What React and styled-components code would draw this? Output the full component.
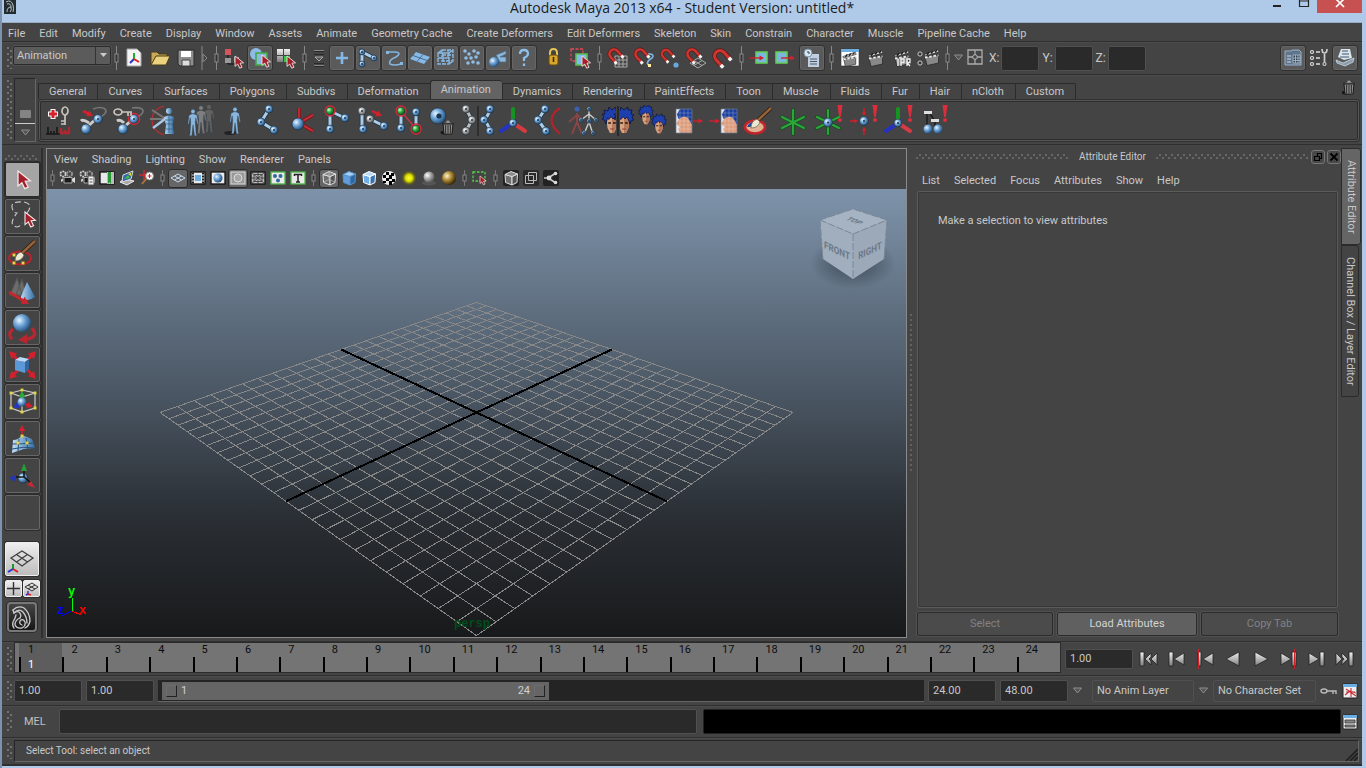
import React, { useState } from 'react'
import styled, { createGlobalStyle, css } from 'styled-components'

const GlobalStyle = createGlobalStyle`
    * {
        box-sizing: border-box;
    }
    body {
        margin: 0;
        background: #afcae8;
        color: #c8c8c8;
        font: 11px/14px Roboto, 'Noto Sans', sans-serif;
    }
    button, input, select {
        font: inherit;
        color: inherit;
        margin: 0;
        padding: 0;
    }
    button {
        border: none;
        background: none;
    }
    svg {
        flex: none;
    }
`

const raised = css`
    border: 1px solid #2b2b2b;
    border-radius: 2px;
    box-shadow: 0 0 0 1px #515151;
`

const Desktop = styled.div`
    min-height: 100vh;
    display: flex;
    flex-direction: column;
    padding: 0 4px 4px 2px;
    background: linear-gradient(90deg, #7b93ae 2px, #afcae8 2px);
`

const TitleBar = styled.header`
    display: grid;
    grid-template-columns: 1fr auto 1fr;
    height: 23px;
    background: #afcae8;
    border-bottom: 1px solid #94acc6;
    color: #1c1c1c;
    align-items: start;
`

const AppLogo = styled.span`
    display: flex;
    padding-left: 2px;
`

const WindowTitle = styled.h1`
    margin: 0;
    font: 14px/16px 'Open Sans', 'Noto Sans', sans-serif;
`

const WindowButtons = styled.div`
    display: flex;
    justify-content: flex-end;
`

const WindowButton = styled.button`
    display: flex;
    justify-content: center;
    width: ${(props) => (props.$close ? '45px' : '27px')};
    height: 13px;
    background: ${(props) => (props.$close ? '#c75050' : 'none')};
`

const Frame = styled.div`
    flex: 1;
    display: flex;
    flex-direction: column;
    background: #444;
    border-bottom: 2px solid #303030;
`

const MenuBar = styled.nav`
    display: flex;
    align-items: center;
    gap: 14px;
    height: ${(props) => props.$height || '18px'};
    padding: ${(props) => props.$top || '3px'} ${(props) => props.$pad || '6px'} 0;
`

const MenuItem = styled.button`
    white-space: nowrap;
    line-height: 15px;
`

const Bar = styled.div`
    display: flex;
    align-items: center;
    height: ${(props) => props.$height};
    padding: 0 ${(props) => props.$end || '4px'} 0 5px;
    border-top: 1px solid #2f2f2f;
    box-shadow: inset 0 1px #4c4c4c;
    gap: ${(props) => props.$gap || '0'};
`

const Grip = styled.span`
    flex: none;
    align-self: stretch;
    width: 5px;
    margin: 5px ${(props) => (props.$tight ? '-2px' : '1px')} 5px 0;
    background-image: radial-gradient(circle at 1px 1px, #717171 1px, transparent 1px),
        radial-gradient(circle at 4px 4px, #717171 1px, transparent 1px);
    background-size: 5px 6px;
`

const HorizontalGrip = styled.span`
    flex: ${(props) => (props.$fixed ? 'none' : 1)};
    height: 5px;
    background-image: radial-gradient(circle at 1px 4px, #676767 1px, transparent 1px),
        radial-gradient(circle at 4px 1px, #676767 1px, transparent 1px);
    background-size: 6px 5px;
`

const SplitterDots = styled.span`
    align-self: center;
    width: 4px;
    height: 160px;
    background-image: radial-gradient(circle at 2px 2px, #626262 1px, transparent 1px);
    background-size: 4px 5px;
`

const ModeSelect = styled.select`
    appearance: none;
    width: 98px;
    height: 19px;
    align-self: flex-start;
    margin-top: 4px;
    padding: 0 4px 0 3px;
    color: #c8c8c8;
    background:
        linear-gradient(90deg, transparent 81px, #333 81px, #333 82px, transparent 82px),
        #5b5b5b;
    ${raised}
`

const ModeBox = styled.span`
    display: flex;
    align-self: stretch;
    position: relative;

    svg {
        position: absolute;
        right: 3px;
        top: 11px;
        pointer-events: none;
    }
`

const ToolButton = styled.button`
    flex: none;
    display: flex;
    align-items: center;
    justify-content: center;
    width: ${(props) => props.$width || '26px'};
    height: 26px;
    ${(props) =>
        props.$on &&
        css`
            background: #5a5a5a;
            border: 1px solid #303030;
            border-radius: 3px;
            box-shadow: inset 0 0 0 1px #666;
        `}
`

const Divider = styled.span`
    flex: none;
    display: flex;
    justify-content: center;
    width: ${(props) => props.$width || '10px'};
`

const Spacer = styled.span`
    flex: ${(props) => (props.$width ? 'none' : 1)};
    width: ${(props) => props.$width || 'auto'};
`

const Coord = styled.label`
    display: flex;
    align-items: center;
    gap: 2px;
    margin-left: 3px;
    font-size: 12px;
`

const Field = styled.input`
    flex: ${(props) => (props.$width ? 'none' : '1 1 0')};
    width: ${(props) => props.$width || 'auto'};
    min-width: 0;
    height: ${(props) => props.$height || '22px'};
    padding: 0 4px;
    color: #c8c8c8;
    background: ${(props) => props.$fill || '#2a2a2a'};
    border: 1px solid ${(props) => props.$edge || '#505050'};
    border-radius: 2px;
`

const Shelf = styled.section`
    display: flex;
    height: 70px;
    padding: 0 4px 0 5px;
    border-top: 1px solid #2f2f2f;
    box-shadow: inset 0 1px #4c4c4c;
`

const ShelfSide = styled.div`
    display: flex;
    flex-direction: column;
    justify-content: flex-end;
    align-items: center;
    width: 22px;
    margin: 3px 2px 2px 1px;
    border: 1px solid #282828;
    border-right-color: #666;
    border-bottom-color: #666;
`

const ShelfSwitch = styled.button`
    display: flex;
    align-items: center;
    justify-content: center;
    width: 100%;
    height: 18px;

    & + & {
        border-top: 1px solid #ccc;
    }
`

const ShelfBody = styled.div`
    flex: 1;
    min-width: 0;
    display: flex;
    flex-direction: column;
`

const TabRow = styled.div`
    display: flex;
    align-items: flex-end;
    height: 24px;
`

const Tab = styled.button`
    height: ${(props) => (props.$active ? '19px' : '16px')};
    padding: 0 11px 0 10px;
    white-space: nowrap;
    line-height: 14px;
    border: solid #2b2b2b;
    border-width: 1px 0 0 1px;
    background: ${(props) => (props.$active ? '#636363' : '#444')};
    border-radius: ${(props) => (props.$active ? '3px 3px 0 0' : '0')};

    &:last-of-type {
        border-right-width: 1px;
        border-radius: 0 2px 0 0;
    }
`

const ShelfIcons = styled.div`
    display: flex;
    align-items: center;
    gap: 3px;
    height: 39px;
    margin: 2px 0 0 2px;
    padding-left: 1px;
    border: 1px solid #2d2d2d;
    border-radius: 2px;
    box-shadow: 0 0 0 1px #555, 0 0 0 2px #303030;
`

const ShelfButton = styled.button`
    flex: none;
    display: flex;
    width: 32px;
    height: 32px;
`

const Workspace = styled.main`
    flex: 1;
    display: flex;
    min-height: 0;
    border-top: 1px solid #2f2f2f;
    padding: 3px 0;
`

const Toolbox = styled.aside`
    flex: none;
    display: flex;
    flex-direction: column;
    gap: 2px;
    width: 41px;
    padding: 7px 3px 0 3px;
    margin-right: 3px;
    border-right: 2px solid #2f2f2f;
`

const ToolSlot = styled.button`
    display: flex;
    align-items: center;
    justify-content: center;
    width: 35px;
    height: 35px;
    background: ${(props) => (props.$active ? '#a5a5a5' : '#444')};
    border: 1px solid ${(props) => (props.$active ? '#2b2b2b' : '#666')};
    border-radius: 2px;
    box-shadow: 0 0 0 1px #2d2d2d;
`

const LayoutSlot = styled(ToolSlot)`
    height: ${(props) => (props.$half ? '17px' : '34px')};
    width: ${(props) => (props.$half ? '17px' : '34px')};
    border-color: #eee;
    background: linear-gradient(#eee, #bdbdbd);
`

const LayoutRow = styled.div`
    display: flex;
    gap: 1px;
    margin-top: ${(props) => props.$top};
`

const MayaSlot = styled(ToolSlot)`
    width: 30px;
    height: 30px;
    margin: 3px 2px 0;
    background: linear-gradient(#454545, #161616);
    border: 2px solid #777;
    border-radius: 4px;
`

const Panel = styled.section`
    flex: 1;
    min-width: 0;
    display: flex;
    flex-direction: column;
    border: 1px solid #8a8a8a;
`

const PanelTools = styled.div`
    display: flex;
    align-items: center;
    height: 21px;
    padding-bottom: 1px;
`

const PanelTool = styled.button`
    flex: none;
    display: flex;
    align-items: center;
    justify-content: center;
    width: 20px;
    height: 19px;
    ${(props) =>
        props.$on &&
        css`
            background: #666;
            border: 1px solid #2c2c2c;
            border-radius: 3px;
        `}
`

const Canvas = styled.div`
    flex: 1;
    min-height: 0;
    display: flex;
    background: linear-gradient(#7e93aa, #4a5663 46%, #2b3036 72%, #18191a);

    svg {
        flex: 1;
        width: 100%;
        height: 100%;
    }
`

const Dock = styled.aside`
    flex: none;
    display: flex;
    width: 455px;
`

const Editor = styled.section`
    flex: 1;
    display: flex;
    flex-direction: column;
    margin-left: 3px;
`

const EditorTitle = styled.div`
    display: flex;
    align-items: center;
    gap: 10px;
    height: 17px;
    font-size: 10px;
`

const TitleTools = styled.span`
    display: flex;
    gap: 2px;
    margin-left: -8px;
`

const TitleTool = styled.button`
    display: flex;
    width: 14px;
    height: 14px;
    padding: 1px;
    border: 1px solid #777;
    border-radius: 3px;
    background: #484848;
`

const EditorBody = styled.div`
    flex: 1;
    padding: 22px 20px;
    margin: 0 3px 4px 1px;
    border: 1px solid #5a5a5a;
    border-radius: 2px;
    box-shadow: inset 0 0 0 1px #383838;
`

const EditorActions = styled.div`
    display: grid;
    grid-template-columns: 136px 1fr 137px;
    gap: 4px;
    padding: 0 3px 2px 1px;
`

const ActionButton = styled.button`
    height: 24px;
    background: ${(props) => (props.disabled ? '#4b4b4b' : '#606060')};
    color: ${(props) => (props.disabled ? '#828282' : '#d4d4d4')};
    ${raised}
`

const SideTabs = styled.div`
    display: flex;
    flex-direction: column;
    width: 21px;
`

const SideTab = styled.button`
    writing-mode: vertical-rl;
    width: ${(props) => (props.$active ? '20px' : '18px')};
    height: ${(props) => (props.$active ? '97px' : '152px')};
    background: ${(props) => (props.$active ? '#656565' : '#444')};
    border: 1px solid #2b2b2b;
    border-radius: 0 3px 3px 0;
    line-height: 16px;
`

const Track = styled.div`
    flex: 1;
    display: grid;
    grid-template-columns: repeat(24, 1fr);
    height: 31px;
    margin-bottom: 3px;
    padding-left: 4px;
    background: #747474;
    border: 1px solid #2b2b2b;
    color: #0c0c0c;
    line-height: 13px;
`

const Frames = styled.div`
    display: flex;
    flex-direction: column;
    justify-content: space-between;
    padding: 0 0 1px 9px;
    background: linear-gradient(#000, #000) 0 100% / 2px 15px no-repeat ${(props) => (props.$current ? '#5d5d5d' : '#747474')};
`

const CurrentFrame = styled.span`
    color: #fff;
`

const Transport = styled.div`
    display: flex;
    gap: 4px;
`

const TransportButton = styled.button`
    display: flex;
    justify-content: center;
    width: 24px;
    height: 22px;
`

const RangeTrack = styled.div`
    flex: 1;
    display: flex;
    height: 22px;
    padding: 2px 4px 1px;
    background: #242424;
    border-bottom: 1px solid #656565;
`

const RangeBar = styled.div`
    display: flex;
    align-items: center;
    gap: 4px;
    padding: 0 4px;
    background: #656565;
    color: #d0d0d0;
`

const RangeHandle = styled.button`
    width: 11px;
    height: 12px;
    border: 1px solid #6d6d6d;
    border-right-color: #222;
    border-bottom-color: #222;
`

const CommandLabel = styled.label`
    width: 46px;
    padding-left: 11px;
    color: #c0c0c0;
`

const HelpLine = styled.div`
    flex: 1;
    display: flex;
    align-items: center;
    justify-content: space-between;
    height: 22px;
    margin-left: 1px;
    padding-left: 11px;
    font-size: 10px;
    border: 1px solid #262626;
    border-right-color: #666;
    border-bottom-color: #666;
`

/* ---------- drawing helpers ---------- */

const Defs = styled.svg`
    position: absolute;
    width: 0;
    height: 0;
`

function Gradients() {
    const balls = [
        ['ball', '#eaf6ff', '#6da4d8', '#1f4870'],
        ['green', '#d8ffd8', '#2fae3c', '#0b5014'],
        ['grayBall', '#fff', '#aaa', '#555'],
        ['gold', '#fff6cf', '#b08a35', '#2e2004'],
        ['glow', '#ffff30', '#d8d800', '#44440000'],
    ]
    return (
        <Defs aria-hidden="true">
            <defs>
                {balls.map(([id, a, b, c]) => (
                    <radialGradient key={id} id={id} cx={id === 'glow' ? '.5' : '.35'} cy={id === 'glow' ? '.5' : '.35'} r={id === 'glow' ? '.5' : '.7'}>
                        <stop offset="0" stopColor={a} />
                        <stop offset=".45" stopColor={b} />
                        <stop offset="1" stopColor={c} />
                    </radialGradient>
                ))}
                <linearGradient id="steel" x2="1">
                    <stop offset="0" stopColor="#bfe0fa" />
                    <stop offset="1" stopColor="#326da6" />
                </linearGradient>
                <linearGradient id="silver" x2="0" y2="1">
                    <stop offset="0" stopColor="#f2f2f2" />
                    <stop offset="1" stopColor="#7d7d7d" />
                </linearGradient>
                <radialGradient id="cubeShadow">
                    <stop offset=".2" stopColor="#2b3743" stopOpacity=".6" />
                    <stop offset="1" stopColor="#2b3743" stopOpacity="0" />
                </radialGradient>
            </defs>
        </Defs>
    )
}

const Svg = ({ size = 24, w, h, children }) => (
    <svg width={w || size} height={h || size} viewBox={`0 0 ${w || size} ${h || size}`} fill="none" aria-hidden="true">
        {children}
    </svg>
)

const Ball = ({ x, y, r = 4, fill = 'ball', ring }) => (
    <>
        <circle cx={x} cy={y} r={r} fill={`url(#${fill})`} stroke="#222d38" strokeWidth=".6" />
        {r < 5 && fill !== 'green' && <circle cx={x} cy={y} r="1" fill="#18324c" />}
        {ring && <circle cx={x} cy={y} r={r + 1} stroke="#d8283a" strokeWidth="1.3" />}
    </>
)

const Bones = ({ d, gray }) => (
    <>
        <path d={d} stroke="#26333f" strokeWidth="4.6" />
        <path d={d} stroke={gray ? '#bdbdbd' : '#a9cdea'} strokeWidth="3" />
    </>
)

const Cursor = ({ x, y, s = 1 }) => (
    <path
        transform={`translate(${x} ${y}) scale(${s})`}
        d="M0 0V11.5L3 9l2.2 4.6 2.6-1.2L5.6 8 9.5 7.6z"
        fill="#a3202b"
        stroke="#f2e6e6"
        strokeWidth="1"
    />
)

const Arrow = ({ x1, y1, x2, y2, c = '#d3202d', w = 1.4, s = 3 }) => {
    const a = Math.atan2(y2 - y1, x2 - x1)
    const at = (d, k) => `${x2 + d * Math.cos(a + k)} ${y2 + d * Math.sin(a + k)}`
    return (
        <>
            <path d={`M${x1} ${y1}L${x2 - s * Math.cos(a)} ${y2 - s * Math.sin(a)}`} stroke={c} strokeWidth={w} />
            <path d={`M${x2} ${y2}L${at(s * 1.7, Math.PI - 0.5)} ${at(s * 1.7, Math.PI + 0.5)}z`} fill={c} />
        </>
    )
}

const Figure = ({ x, y = 16, fill = '#8ab6dc', o = 1, s = 1 }) => (
    <g transform={`translate(${x} ${y}) scale(${s})`} opacity={o} fill={fill} stroke="#24384a" strokeWidth=".4">
        <circle cx="0" cy="-11" r="2.3" />
        <path d="M-1-8.6-4.2-7.2-5.4 1.5-4.5 3-3-4.5-2.4 0-3.2 13-4 14.4H-1.2L0 3 1.6 14.4H4.2L3.3 12.6 2.4 0 3-4.5 4.8 3 5.7 1.5 4.2-7.2 1-8.6z" />
    </g>
)

const Head = ({ x, y, s = 1 }) => (
    <g transform={`translate(${x} ${y}) scale(${s})`}>
        <path d="M-4-7Q0-9 4-7L5.2 0 4.5 6 2 11H-2L-4.5 6-5.2 0z" fill="#d9a482" />
        <path d="M5.2 0 4.5 6 2 11H0V-4H4z" fill="#b77b5c" />
        <path d="M-6 2-7.5-2-10-3-8-5-10-8-7-8-8-12-4-11-3-15 0-12 4-15 4-12 8-12 7-8 10-7 8-5 9.5-2 7-1 6 2 4.6-2 3-5 1-3-1-5.5-3-2.5-4.6-4z" fill="#1e3fae" stroke="#0a1238" strokeWidth=".8" />
        <path d="M-3.8 1H-1M1 1H3.8" stroke="#2c1a12" strokeWidth="1.3" />
        <path d="M-1.8 7H1.8" stroke="#8c4334" strokeWidth="1.1" />
    </g>
)

const Bang = () => (
    <>
        <path d="M25.5 0h5L28.8 12h-1.6z" fill="#d92f3d" />
        <circle cx="28" cy="15" r="2" fill="#d92f3d" />
    </>
)

const Trash = ({ x = 0, y = 0 }) => (
    <g transform={`translate(${x} ${y})`}>
        <ellipse cx="2.5" cy="12.6" rx="4" ry="1.8" fill="#161616" />
        <path d="M1 4H11L10 14H2z" fill="#8b8b8b" stroke="#1a1a1a" />
        <path d="M3.6 5V13M6 5V13M8.4 5V13" stroke="#2d2d2d" />
        <path d="M0 3.5Q6 0 12 3.5z" fill="#aaa" stroke="#222" strokeWidth=".7" />
        <path d="M4.5 1.3H7.5" stroke="#bbb" />
    </g>
)

const Star = () => (
    <>
        <path d="M16 5V29M5 12 27 23M27 12 5 23" stroke="#0e4f18" strokeWidth="3.6" strokeLinecap="round" />
        <path d="M16 5V29M5 12 27 23M27 12 5 23" stroke="#2ba63a" strokeWidth="2.2" strokeLinecap="round" />
    </>
)

const Triad = () => (
    <>
        <path d="M16 18V4" stroke="#179323" strokeWidth="4" strokeLinecap="round" />
        <path d="M16 18 4 26" stroke="#2633be" strokeWidth="4" strokeLinecap="round" />
        <path d="M16 18 28 26" stroke="#d63a43" strokeWidth="4" strokeLinecap="round" />
        <Ball x={16} y={18} r={4} />
    </>
)

const Brush = ({ x = 0, y = 0 }) => (
    <g transform={`translate(${x} ${y})`}>
        <path d="M14 15 28 2" stroke="#2c1b0d" strokeWidth="4" />
        <path d="M14 15 28 2" stroke="#96633a" strokeWidth="2.5" />
        <path d="M8 22Q8 15 14 13L17 16Q15 22 8 22z" fill="#ece7d1" stroke="#655d48" strokeWidth=".7" />
    </g>
)

const GridHead = ({ x }) => (
    <g transform={`translate(${x} 4)`}>
        <path d="M0 0H16V24H0z" fill="#e3e7ef" />
        <path d="M2 9 1 5 4 0H16V16Q12 7 3 10z" fill="#1c3f9e" />
        <path d="M3 10Q8 6 12 9L16 16V24H4L2 20 4 18 0 15z" fill="#dc9c7b" />
        <path d="M0 4H16M0 8H16M0 12H16M0 16H16M0 20H16M4 0V24M8 0V24M12 0V24" stroke="#ffffff70" strokeWidth=".5" />
        <path d="M0 0H16V24H0z" stroke="#6b7b95" strokeWidth=".7" />
    </g>
)

const Clapper = ({ x = 3, y = 3 }) => (
    <g transform={`translate(${x} ${y})`}>
        <path d="M1 6.5 15 1.5 16 4 2 8z" fill="#ddd" stroke="#222" strokeWidth=".7" />
        <path d="M4 7 6 4M8 5.5 10 3M12 4.3 14 2" stroke="#222" strokeWidth="1.5" />
        <path d="M2 9 15.5 7V15L4 17.5z" fill="#888" stroke="#222" strokeWidth=".7" />
        <path d="M2 9.5 15.5 7.3" stroke="#eee" strokeWidth="1.8" strokeDasharray="2.5 1.8" />
    </g>
)

const Magnet = ({ x = 8, y = 8, s = 1 }) => (
    <g transform={`translate(${x} ${y}) rotate(-42) scale(${s})`}>
        <path d="M-4.5 7V0A4.5 4.5 0 0 1 4.5 0V7" stroke="#5f1515" strokeWidth="3.8" />
        <path d="M-4.5 7V0A4.5 4.5 0 0 1 4.5 0V7" stroke="#cd352f" strokeWidth="2.6" />
        <path d="M-4.5 6V9M4.5 6V9" stroke="#f4f4f4" strokeWidth="3" />
    </g>
)

const KeyShape = ({ x, y, vertical }) => (
    <g transform={`translate(${x} ${y})${vertical ? ' rotate(90)' : ''}`} stroke="#c9c4bb" strokeWidth="1.7">
        <ellipse cx="0" cy="0" rx="4" ry="3" />
        <path d="M4 0H14M10 0V4M13 0V4" />
    </g>
)

const Handles = ({ pts }) =>
    pts.map(([x, y]) => <rect key={`${x}-${y}`} x={x - 1} y={y - 1} width="2" height="2" fill="#fff" stroke="#d6c824" />)

const Cam = () => (
    <>
        <circle cx="4" cy="4" r="2.6" stroke="#ccc" strokeWidth="1.8" strokeDasharray="2 .8" />
        <circle cx="10.5" cy="4" r="2.6" stroke="#999" strokeWidth="1.8" strokeDasharray="2 .8" />
        <path d="M5 7.5H13V13H5z" fill="#1a1a1a" stroke="#aaa" />
        <path d="M13 9 16 7V13L13 11" fill="#ddd" />
        <path d="M4 8.5 2 9.5V12L4 11" fill="#ccc" />
    </>
)

const Chip = ({ edge = '#111', fill = '#e9e9e9', children }) => (
    <>
        <rect x="1" y="2" width="14" height="12" fill={fill} stroke={edge} strokeWidth="1.3" />
        {children}
    </>
)

const Cube = ({ fill = '#6e6e6e', edge = '#ddd', side = '#555', top = '#8a8a8a' }) => (
    <g stroke={edge} strokeLinejoin="round">
        <path d="M2 4.5 9 6.5V15L2.6 12.5z" fill={fill} />
        <path d="M9 6.5 14.5 4 14 12.5 9 15z" fill={side} />
        <path d="M2 4.5 8 1.5 14.5 4 9 6.5z" fill={top} />
    </g>
)

const IsoGrid = () => (
    <path d="M5 15 16 8 27 15 16 23zM10.5 11.5 21.5 19M21.5 11.5 10.5 19" stroke="#3f3f3f" strokeWidth="1.3" />
)

/* ---------- icon tables ---------- */

const shelfIcons = [
    ['Set Key', <>
        <path d="M11 4V14M6 9H16" stroke="#fff" strokeWidth="5" />
        <path d="M11 5V13M7 9H15" stroke="#d8202c" strokeWidth="3" />
        <KeyShape x={23} y={6} vertical />
        <path d="M4 29H18M6 22V29M9 26V29M12 26V29M15 22V29" stroke="#181818" strokeWidth="1.6" />
        <path d="M18 28H28M19 23V29M23 25V29M27 22V29" stroke="#b22630" strokeWidth="2.4" />
    </>],
    ['IK Handle', <>
        <path d="M20 14Q32 8 28 4 24 1 16 4" stroke="#777" strokeWidth="1.6" />
        <path d="M9 23 20 13M12 18Q6 14 4 16" stroke="#ccc" strokeWidth="3" />
        <Ball x={9} y={24} r={5} /><Ball x={21} y={14} r={4.5} />
        <Arrow x1={6} y1={6} x2={16} y2={11} w={3} s={4} />
    </>],
    ['IK Spline', <>
        <path d="M22 14Q34 8 30 4 26 2 20 3" stroke="#777" strokeWidth="1.6" />
        <path d="M11 23 22 13M12 18Q8 14 5 16" stroke="#ccc" strokeWidth="3" />
        <Ball x={11} y={24} r={5} /><Ball x={22} y={14} r={4.5} ring />
        <KeyShape x={6} y={7} />
    </>],
    ['Full Body', <>
        <path d="M17 1Q5 4 5 15T17 30" stroke="#b52d35" strokeWidth="1.2" />
        <path d="M3 14H19M5 5 19 14" stroke="#777" strokeWidth="2" />
        <path d="M6 23 18 14" stroke="#a8c9e6" strokeWidth="2.4" />
        <circle cx="22" cy="6" r="3" fill="url(#steel)" />
        <path d="M17 12Q22 9 27 12L25.5 20 27 29H18L19 20z" fill="url(#steel)" />
        <path d="M18 15H26M19 19H26M19 24H26M22 10V28" stroke="#315878" strokeWidth=".7" />
    </>],
    ['Ghost', <><Figure x={27} y={13} fill="#777" o={0.6} /><Figure x={19} y={14} fill="#999" o={0.7} /><Figure x={11} y={17} s={0.95} /></>],
    ['Unghost', <><ellipse cx="13" cy="28" rx="6" ry="2" fill="#222" /><Figure x={18} y={15} s={0.95} /></>],
    ['Joint Tool', <><Bones d="M17 4 9 17 22 25" /><Ball x={17} y={4} /><Ball x={9} y={17} /><Ball x={22} y={25} /></>],
    ['Insert Joint', <>
        <path d="M12 18V3M12 18 26 10M12 18 26 26" stroke="#7f1b20" strokeWidth="4" />
        <path d="M12 18V3M12 18 26 10M12 18 26 26" stroke="#c9323a" strokeWidth="1.5" />
        <Ball x={11} y={19} r={6} />
    </>],
    ['Reroot', <><Bones d="M8 24V6L23 13" /><Ball x={8} y={6} fill="green" ring /><Ball x={23} y={13} /><Ball x={8} y={24} /></>],
    ['Disconnect', <>
        <Bones d="M5 6V24" /><Bones d="M13 14 27 21" /><Ball x={5} y={6} fill="grayBall" /><Ball x={6} y={24} />
        <Ball x={13} y={14} fill="grayBall" /><Ball x={27} y={21} /><Arrow x1={15} y1={6} x2={25} y2={11} w={2.4} s={4} />
    </>],
    ['Connect', <>
        <Bones d="M9 6V23M24 7V24" /><path d="M9 6 24 24" stroke="#cf3642" strokeWidth="1.2" />
        <Ball x={9} y={6} fill="green" ring /><Ball x={9} y={23} /><Ball x={24} y={7} /><Ball x={24} y={24} fill="green" ring />
    </>],
    ['Remove Joint', <><Ball x={11} y={11} r={8} /><circle cx="12" cy="11" r="2.6" fill="#173451" /><Trash x={15} y={15} /></>],
    ['Mirror Joint', <>
        <Bones gray d="M4 4 10 15 4 26" /><Bones d="M29 4 23 15 29 26" /><path d="M16 1V31" stroke="#181818" />
        <Ball x={4} y={4} fill="grayBall" /><Ball x={10} y={15} fill="grayBall" /><Ball x={4} y={26} fill="grayBall" />
        <Ball x={28} y={4} /><Ball x={22} y={15} /><Ball x={28} y={26} />
    </>],
    ['Orient Joint', <Triad />],
    ['Bind', <><Bones d="M13 4 6 15 14 26" /><Ball x={13} y={4} /><Ball x={6} y={15} /><Ball x={14} y={26} /><path d="M28 3Q11 14 28 29" stroke="#b4232b" strokeWidth="2.2" /></>],
    ['Human IK', <>
        <path d="M10 8V17L5 29M10 17 15 29M10 10 2 17M10 10 16 15" stroke="#8a4444" strokeWidth="2" /><circle cx="10" cy="4" r="2.5" fill="#3c5fb2" />
        <path d="M22 4V17L17 29M22 17 26 29M22 9 14 15M22 9 29 15" stroke="#ccc" strokeWidth="1.4" />
        {[[22, 4], [22, 16], [17, 28], [26, 28], [14, 15], [29, 15]].map(([x, y]) => <Ball key={`${x}${y}`} x={x} y={y} r={2.2} />)}
    </>],
    ['Mirror Weights', <><Head x={10} y={17} /><Head x={22} y={17} /><path d="M16 0V32" stroke="#444" strokeWidth="4" /><path d="M16 1V31" stroke="#111" /></>],
    ['Copy Weights', <><Head x={9} y={11} s={0.75} /><Head x={22} y={20} s={0.75} /></>],
    ['Export Map', <><GridHead x={4} /><Arrow x1={21} y1={16} x2={31} y2={16} /></>],
    ['Import Map', <><GridHead x={14} /><Arrow x1={2} y1={16} x2={13} y2={16} /></>],
    ['Paint Weights', <><ellipse cx="13" cy="22" rx="10" ry="6.5" fill="#dfb294" stroke="#c2232c" strokeWidth="2.6" /><path d="M5 22Q8 15 16 18L8 22z" fill="#234c9e" /><Brush x={1} y={1} /></>],
    ['Locator', <Star />],
    ['Locator Constraint', <><Star /><Ball x={16} y={17.5} r={4.5} /><Bang /></>],
    ['Point Constraint', <>
        <Arrow x1={17} y1={3} x2={17} y2={11} s={2.5} /><Arrow x1={17} y1={30} x2={17} y2={22} s={2.5} /><Arrow x1={3} y1={16} x2={11} y2={16} s={2.5} />
        <Ball x={17} y={16} r={4.5} /><Bang />
    </>],
    ['Orient Constraint', <><Triad /><Bang /></>],
    ['Parent Constraint', <>
        <path d="M10 9V23M13 9 18 16V23" stroke="#181818" strokeWidth="1.3" /><path d="M7 6H15V9H7zM14 14H22V17H14z" fill="#ddd" />
        <circle cx="11" cy="24" r="4.5" fill="url(#ball)" /><circle cx="21" cy="24" r="4.5" fill="url(#ball)" /><Bang />
    </>],
]

const fileTools = [
    ['New Scene', false, <><path d="M5 3H15L19 7V20H5z" fill="#f4f4f4" stroke="#aaa" /><path d="M12 7V13" stroke="#20b030" strokeWidth="2" /><path d="M12 13 8 17" stroke="#2233d0" strokeWidth="2" /><path d="M12 13 17 16" stroke="#d22" strokeWidth="2" /></>],
    ['Open Scene', false, <><path d="M3 19V6H9L11 8H19V11" fill="#c9a958" stroke="#4b3c16" /><path d="M3 19 8 10H22L18 19z" fill="#ecd17e" stroke="#4b3c16" /></>],
    ['Save Scene', false, <><path d="M4 4H20V20H6L4 18z" fill="#8e8e8e" stroke="#2b2b2b" /><path d="M7 5H17V11H7z" fill="#fff" /><path d="M8 14H16V20H8z" fill="#ddd" stroke="#444" /></>],
]
const selectTools = [
    ['Select by hierarchy', false, <><path d="M6 4V18H14" stroke="#111" /><path d="M3 3H9V9H3z" fill="#d8545b" /><path d="M3 12H9V17H3zM12 11H17V16H12z" fill="#999" /><Cursor x={13} y={10} s={0.9} /></>],
    ['Select by object', true, <><circle cx="8" cy="8" r="6" fill="#8bbbe6" /><path d="M8 7H19V19H8z" fill="#8bb9df" stroke="#41a940" strokeWidth="1.5" /><Cursor x={14} y={9} s={0.9} /></>],
    ['Select by component', false, <><path d="M3 3H9V9H3zM10 3H16V9H10zM3 10H9V16H3z" fill="url(#silver)" /><path d="M10 10H16V16H10z" fill="#35c540" /><Cursor x={13} y={10} s={0.9} /></>],
]
const maskTools = [
    ['Handles', <path d="M12 6V18M6 12H18" stroke="#83b8e6" strokeWidth="2.6" />],
    ['Joints', <><Bones d="M6 18V6L18 12" /><Ball x={6} y={6} r={3} /><Ball x={6} y={18} r={3} /><Ball x={18} y={12} r={3} /></>],
    ['Curves', <><path d="M6 6H14Q20 7 14 11 6 14 8 18 12 20 19 18" stroke="#84b6e2" strokeWidth="1.6" /><path d="M4 5H7V8H4zM18 16H21V19H18z" fill="#84b6e2" /></>],
    ['Surfaces', <><path d="M2 13 8 6 22 11 16 18z" fill="#86b9e5" /><path d="M5 9.5 19 14.5M15 8.5 9 15.5" stroke="#496c8c" /></>],
    ['Deformations', <path d="M4 7H15V18H4zM8 4H19V15H8zM4 12H15M9 7V18M14 4V15M8 9H19M4 7 8 4M15 7 19 4M15 18 19 15" stroke="#86b7e1" strokeWidth="1.4" strokeDasharray="4 1" />],
    ['Dynamics', <>{[[5, 5], [9, 8], [14, 5], [18, 7], [6, 12], [11, 12], [16, 11], [8, 17], [13, 16], [18, 17]].map(([x, y]) => <circle key={`${x}-${y}`} cx={x} cy={y} r="1.8" fill="#8fbce2" />)}</>],
    ['Rendering', <><circle cx="8" cy="16" r="5" fill="url(#ball)" /><path d="M10 9 20 5V8L14 11H20V16H14z" fill="#8db8dc" stroke="#4a6d8c" strokeWidth=".7" /></>],
    ['Miscellaneous', <path d="M8 8Q8 4 12 4T16 8Q16 10 12 12V15M12 17.5V20" stroke="#8cc0ec" strokeWidth="2.3" />],
]
const lockTools = [
    ['Lock Selection', <><path d="M8 10V7Q8 3 11.5 3T15 7V10" stroke="#e6c556" strokeWidth="2" /><rect x="7" y="9" width="9" height="10" rx="2" fill="#d8a72a" stroke="#6b4d0c" /><path d="M11.5 11V16" stroke="#3d2a00" strokeWidth="1.6" /></>],
    ['Highlight Selection', <><rect x="3" y="3" width="12" height="12" stroke="#e34a50" strokeWidth="1.3" strokeDasharray="3 1.5" /><path d="M8 8H19V19H8z" fill="#84bbee" stroke="#59bf50" strokeWidth="1.6" /><Cursor x={14} y={10} s={0.9} /></>],
]
const snapTools = [
    ['Snap to grids', <><path d="M9 10H21V21H9zM13 10V21M17 10V21M9 14H21M9 18H21" stroke="#aaa" /><Magnet /></>],
    ['Snap to curves', <><path d="M12 8Q24 7 20 12 12 17 18 20" stroke="#7fb4e0" strokeWidth="1.6" /><rect x="16" y="18" width="3" height="3" fill="#fff2a0" /><Magnet /></>],
    ['Snap to points', <><circle cx="18" cy="19" r="2.6" fill="#67a8de" /><Magnet s={0.9} /></>],
    ['Snap to view planes', <><path d="M6 17 14 12 22 17 14 22zM10 14.5 18 19.5M18 14.5 10 19.5" stroke="#aaa" /><Magnet /></>],
    ['Make Live', <Magnet x={10} y={10} s={1.2} />],
]
const inputTools = [
    ['Inputs', false, <><path d="M8 6H19V17H8z" fill="#7cb5dd" stroke="#62cf54" strokeWidth="1.5" /><Arrow x1={2} y1={12} x2={16} y2={12} /></>],
    ['Outputs', false, <><path d="M2 6H13V17H2z" fill="#7cb5dd" stroke="#62cf54" strokeWidth="1.5" /><Arrow x1={7} y1={12} x2={21} y2={12} /></>],
    ['Construction History', true, <><path d="M8 8H19V21H8z" fill="#bfcfe0" /><path d="M10 13H17M10 15.5H17M10 18H17" stroke="#4c5968" /><circle cx="8" cy="7" r="4" fill="#d5e7f5" stroke="#7890a6" /><path d="M8 5V7H10" stroke="#333" /></>],
]
const renderTools = [
    ['Render View', <><path d="M3 3H21V20H3z" fill="#fff" stroke="#333" strokeWidth=".6" /><path d="M3 3H21V6H3z" fill="#6aaee2" /><g transform="translate(2 3) scale(.9)"><Clapper x={2} y={2} /></g></>],
    ['Render', <Clapper x={3} y={3} />],
    ['IPR Render', <><Clapper x={3} y={3} /><path d="M8 13V20M11 20V13H14V16.5H11M17 20V13H20V16.5H17L20 20" stroke="#eee" strokeWidth="1.3" /></>],
    ['Render Settings', <><Clapper x={7} y={2} /><circle cx="4" cy="8" r="2.1" fill="#333" stroke="#ccc" /><circle cx="4" cy="17" r="2.1" fill="#333" stroke="#ccc" /></>],
]
const sideTools = [
    ['Attribute Editor', true, <><path d="M4 5H10L11 4H18L20 6V19H4z" fill="#60758a" stroke="#98b3cc" /><path d="M6 10H10M6 13H10M6 16H10" stroke="#cfdeec" strokeWidth="1.2" /><path d="M12 9H19V17H12zM12 12H19M12 14.5H19M14.5 9V17M17 9V17" stroke="#aec3d6" strokeWidth=".8" fill="#35424f" /></>],
    ['Tool Settings', false, <>
        {[6, 12, 18].map((y) => <circle key={y} cx="5" cy={y} r="1.5" stroke="#ddd" strokeWidth="1.2" />)}
        <path d="M9 6H13M9 12H13M9 18H13" stroke="#ddd" strokeWidth="1.4" /><path d="M17.5 8V16M15 3Q15 7 17.5 7T20 3" stroke="#ccc" strokeWidth="1.7" /><circle cx="17.5" cy="18" r="1.5" stroke="#ccc" strokeWidth="1.2" />
    </>],
    ['Channel Box', true, <><path d="M3 14 10 17 21 12 20 16 12 20 4 17z" fill="#8c9eae" stroke="#ccd9e4" strokeWidth=".8" /><path d="M8 3H17L19 12 11 14 5 11z" fill="#d9e5ef" /><path d="M9 5H15M9 8H16M7 11H16" stroke="#45566a" strokeWidth="1.2" /></>],
]

const tools = [
    ['Select Tool', <Cursor x={11} y={7} s={1.3} />],
    ['Lasso Tool', <><path d="M20 12Q27 3 17 1 4 0 5 6T10 12Q2 22 7 25T15 22" stroke="#ccc" strokeDasharray="6 3" strokeWidth="1.1" /><Cursor x={18} y={11} s={1.1} /></>],
    ['Paint Selection Tool', <><ellipse cx="13" cy="20" rx="11" ry="6.5" stroke="#b8222c" strokeWidth="2" /><Brush y={1} /><Handles pts={[[7, 17], [7, 25], [16, 25]]} /></>],
    ['Move Tool', <><path d="M3 20 10 3 15 20zM9 20 15 4 20 22z" fill="#6c6c6c" stroke="#555" /><path d="M13 24 20 7 28 22Q22 27 13 24z" fill="url(#steel)" /><Arrow x1={2} y1={17} x2={22} y2={29} c="#c9252e" w={2.8} s={5} /></>],
    ['Rotate Tool', <><path d="M6 17Q0 22 5 27M25 16Q32 25 20 27" stroke="#b82631" strokeWidth="3.4" /><path d="M11 28 20 22V32z" fill="#b82631" /><circle cx="15" cy="11" r="9" fill="url(#ball)" /></>],
    ['Scale Tool', <>
        <Arrow x1={16} y1={16} x2={2} y2={2} w={2.8} s={5} /><Arrow x1={16} y1={16} x2={29} y2={2} w={2.8} s={5} />
        <Arrow x1={16} y1={16} x2={2} y2={30} w={2.8} s={5} /><Arrow x1={16} y1={16} x2={29} y2={30} w={2.8} s={5} />
        <path d="M8 11 18 13V24L8 21z" fill="#5a99d6" /><path d="M8 11 13 8 22 10 18 13z" fill="#b8ddfb" /><path d="M18 13 22 10V20L18 24z" fill="#33679e" />
    </>],
    ['Universal Manipulator', <>
        <path d="M4 7 15 4 28 7V22L15 26 4 22zM4 7 15 11 28 7M15 11V26" stroke="#ccc" strokeWidth="1.2" />
        <Arrow x1={15} y1={16} x2={15} y2={5} c="#28ad35" w={2.4} s={4} /><Arrow x1={15} y1={17} x2={6} y2={22} c="#2936c2" w={2.4} s={4} /><Arrow x1={15} y1={17} x2={26} y2={21} w={2.4} s={4} />
        <circle cx="15" cy="16" r="4.5" fill="url(#ball)" /><Handles pts={[[4, 7], [15, 4], [28, 7], [4, 22], [15, 26], [28, 22]]} />
    </>],
    ['Soft Modification', <>
        <path d="M6 17Q12 17 15 12 20 14 25 16L28 25 17 26 5 30z" fill="url(#steel)" /><path d="M5 21Q15 21 27 20M5 26Q17 23 28 25M12 16 11 28M19 15 21 27" stroke="#28527a" />
        <Arrow x1={15} y1={12} x2={15} y2={2} s={4} /><Handles pts={[[15, 13], [11, 20], [20, 20]]} />
    </>],
    ['Show Manipulator', <>
        <Ball x={16} y={18} r={5} /><path d="M17 17V9M17 17 24 23M17 17H8" stroke="#111" strokeWidth="1.5" />
        <path d="M17 3 20 11H14z" fill="#2a9a34" /><path d="M2 18 9 15V22z" fill="#2337b8" /><path d="M28 28 20 25 24 21z" fill="#c42a34" />
    </>],
    ['Last Tool', null],
]

const panelTools = [
    null,
    ['Select Camera', 0, <Cam />],
    ['Camera Attributes', 0, <><Cam /><path d="M9 6H15V15H9z" fill="#eee" stroke="#555" /><path d="M10.5 9H13.5M10.5 12H13.5" stroke="#555" /></>],
    ['Bookmarks', 0, <><Chip /><path d="M8 2H15V14H8z" fill="#bbb" /><path d="M9 2H12V14L10.5 12 9 14z" fill="#289836" /></>],
    ['Image Plane', 0, <><path d="M1 12 5 9 15 11 8 15z" fill="#aaa" stroke="#eee" /><path d="M4 5 14 1 12 9 3 12z" fill="#36a" stroke="#ddd" /><path d="M5 9 9 5 11 8z" fill="#3fc040" /><path d="M9 4 12 3V6z" fill="#eddf2d" /></>],
    ['2D Pan/Zoom', 0, <><path d="M5 0V10M0 5H10" stroke="#cf2832" strokeWidth="1.6" /><circle cx="10.5" cy="6" r="4" fill="#fff" stroke="#888" /><path d="M10.5 4V8M8.5 6H12.5" stroke="#d22" /><path d="M7 9 3 14" stroke="#a8743d" strokeWidth="2" /></>],
    null,
    ['Grid', 1, <path d="M1 8 8 4 15 8 8 12zM4.5 6 11.5 10M11.5 6 4.5 10" stroke="#c7dcf0" />],
    ['Film Gate', 0, <Chip><path d="M3 2.5V14M13 2.5V14" stroke="#222" strokeWidth="2" strokeDasharray="2 1" /><path d="M5 5H11V11H5z" fill="#6caee2" /></Chip>],
    ['Resolution Gate', 0, <Chip><circle cx="8" cy="8" r="4.5" fill="url(#ball)" /></Chip>],
    ['Gate Mask', 1, <Chip fill="#999" edge="#ccc"><circle cx="8" cy="8" r="4" stroke="#ddd" fill="#a7a7a7" /></Chip>],
    ['Field Chart', 0, <Chip fill="#bbb"><path d="M1 2 15 14M15 2 1 14M1 8H15M8 2V14M4 4.5H12V11.5H4z" stroke="#333" strokeWidth=".8" /></Chip>],
    ['Safe Action', 0, <Chip edge="#49b447"><circle cx="5" cy="6" r="2" fill="#33689a" /><circle cx="10.5" cy="6" r="2" fill="#33689a" /><circle cx="8" cy="10.5" r="2" fill="#33689a" /></Chip>],
    ['Safe Title', 0, <Chip edge="#49b447"><path d="M4.5 6V4.5H11.5V6M8 4.5V12M6 12H10" stroke="#222" strokeWidth="1.5" /></Chip>],
    null,
    ['Wireframe', 1, <><Cube /><path d="M2.6 12 8 9.5 14 12M8 9.5V2" stroke="#bbb" strokeWidth=".7" /></>],
    ['Smooth Shade', 0, <Cube fill="#5f9ddb" side="#2e67a3" top="#a4d0f6" edge="#5a94cc" />],
    ['Wireframe on Shaded', 0, <Cube fill="#6faee6" side="#3874b1" top="#b6dafa" edge="#fff" />],
    ['Textured', 0, <><circle cx="8" cy="8" r="7" fill="#eee" /><path d="M5 2H8V5H5zM10 3H13V6H10zM2 5H5V8H2zM8 5H11V9H8zM5 8H8V11H5zM11 9H14V12H11zM2 11H5V13H2zM8 11H11V15H8z" fill="#000" /></>],
    ['Use All Lights', 0, <circle cx="8" cy="8" r="8" fill="url(#glow)" />],
    ['Shadows', 0, <><ellipse cx="8" cy="13" rx="7" ry="2.5" fill="#555" /><circle cx="8" cy="7" r="5.5" fill="url(#grayBall)" /></>],
    ['High Quality', 0, <circle cx="8" cy="8" r="7" fill="url(#gold)" />],
    null,
    ['Isolate Select', 0, <><rect x="1" y="2" width="12" height="9" stroke="#4fd548" strokeWidth="1.3" strokeDasharray="2.5 1.5" /><Cursor x={8} y={6} s={0.65} /></>],
    null,
    ['X-Ray', 0, <><rect width="16" height="16" rx="2" fill="#222" /><Cube /></>],
    ['X-Ray Active', 0, <><rect width="16" height="16" rx="2" fill="#2b2b2b" /><path d="M2.5 5.5H10.5V13.5H2.5zM5.5 2.5H13.5V10.5H5.5z" stroke="#bbb" /></>],
    ['X-Ray Joints', 0, <><rect width="16" height="16" rx="2" fill="#222" /><path d="M13 3 5 8 13 13M5 8H1" stroke="#ccc" strokeWidth="1.6" /><circle cx="12.5" cy="3.5" r="1.8" fill="#ddd" /><circle cx="6" cy="8" r="2.4" fill="#ddd" /><circle cx="12.5" cy="12.5" r="1.8" fill="#ddd" /></>],
]

const transport = [
    ['Go to start', 'M3 4H7V18H3zM14 5 8 11 14 17V13L12 11 14 9zM20 5 14 11 20 17z'],
    ['Step back frame', 'M4 4H8V18H4zM19 5 9 11 19 17z'],
    ['Step back key', 'M5 4H8V18H5zM20 5 10 11 20 17z', 5],
    ['Play backwards', 'M18 4 5 11 18 18z'],
    ['Play forwards', 'M6 4 19 11 6 18z'],
    ['Step forward key', 'M4 5 14 11 4 17zM15 4H19V18H15z', 17],
    ['Step forward frame', 'M4 5 14 11 4 17zM15 4H19V18H15z'],
    ['Go to end', 'M3 5 9 11 3 17zM9 5 15 11 9 17V13L11 11 9 9zM16 4H20V18H16z'],
]

const menus = [
    'File', 'Edit', 'Modify', 'Create', 'Display', 'Window', 'Assets', 'Animate', 'Geometry Cache', 'Create Deformers',
    'Edit Deformers', 'Skeleton', 'Skin', 'Constrain', 'Character', 'Muscle', 'Pipeline Cache', 'Help',
]
const shelfTabs = [
    'General', 'Curves', 'Surfaces', 'Polygons', 'Subdivs', 'Deformation', 'Animation', 'Dynamics', 'Rendering',
    'PaintEffects', 'Toon', 'Muscle', 'Fluids', 'Fur', 'Hair', 'nCloth', 'Custom',
]

function Separator({ width }) {
    return (
        <Divider $width={width}>
            <Svg w={5} h={24}>
                <path d="M2.5 0V24" stroke="#888" />
                <rect x="1" y="8" width="3" height="8" fill="#333" stroke="#888" />
            </Svg>
        </Divider>
    )
}

const Triangle = () => (
    <Svg w={11} h={8}>
        <path d="M1.5 1H9.5L5.5 6z" fill="#555" stroke="#8e8e8e" />
    </Svg>
)

const Tool = ({ label, on, width, children }) => (
    <ToolButton aria-label={label} $on={on} $width={width}>
        <Svg size={24}>{children}</Svg>
    </ToolButton>
)

function StatusLine() {
    return (
        <Bar $height="33px" $end="4px">
            <Grip />
            <ModeBox>
                <ModeSelect aria-label="Menu set" defaultValue="Animation">
                    <option>Animation</option>
                    <option>Polygons</option>
                    <option>Dynamics</option>
                </ModeSelect>
                <Svg w={9} h={6}>
                    <path d="M1 0H8L4.5 4z" fill="#ccc" />
                </Svg>
            </ModeBox>
            <Separator />
            {fileTools.map(([label, on, art]) => (
                <Tool key={label} label={label} on={on}>{art}</Tool>
            ))}
            <Divider $width="12px">
                <Svg w={8} h={24}>
                    <path d="M1 0V24M2 8 6 12 2 16z" stroke="#888" />
                </Svg>
            </Divider>
            <Separator />
            {selectTools.map(([label, on, art]) => (
                <Tool key={label} label={label} on={on}>{art}</Tool>
            ))}
            <Separator />
            <Divider $width="20px">
                <Svg w={12} h={20}>
                    <path d="M1 3.5H11M1 6.5H11M1 15.5H11M1 18.5H11" stroke="#2a2a2a" />
                    <path d="M1 2.5H11M1 17.5H11" stroke="#888" />
                    <path d="M2 9H10L6 13z" fill="#555" stroke="#aaa" />
                </Svg>
            </Divider>
            {maskTools.map(([label, art]) => (
                <Tool key={label} label={label} on>{art}</Tool>
            ))}
            <Spacer $width="4px" />
            {lockTools.map(([label, art]) => (
                <Tool key={label} label={label}>{art}</Tool>
            ))}
            <Separator width="12px" />
            {snapTools.map(([label, art]) => (
                <Tool key={label} label={label}>{art}</Tool>
            ))}
            <Separator width="12px" />
            {inputTools.map(([label, on, art]) => (
                <Tool key={label} label={label} on={on}>{art}</Tool>
            ))}
            <Separator width="12px" />
            {renderTools.map(([label, art]) => (
                <Tool key={label} label={label}>{art}</Tool>
            ))}
            <Separator width="12px" />
            <Triangle />
            <Tool label="Input mode" width="22px">
                <path d="M5 4H19V18H5zM12 4V18M5 11H19" stroke="#aaa" strokeWidth="1.3" />
                <circle cx="12" cy="11" r="2.3" fill="#444" stroke="#bbb" />
            </Tool>
            {['X:', 'Y:', 'Z:'].map((axis) => (
                <Coord key={axis}>
                    {axis}
                    <Field $width="38px" $height="25px" />
                </Coord>
            ))}
            <Spacer />
            {sideTools.map(([label, on, art]) => (
                <Tool key={label} label={label} on={on}>{art}</Tool>
            ))}
        </Bar>
    )
}

function ShelfPanel() {
    const [active, setActive] = useState('Animation')
    return (
        <Shelf>
            <Grip />
            <ShelfSide>
                <ShelfSwitch aria-label="Shelf tabs">
                    <Svg w={13} h={9}><rect x="1" y="0" width="11" height="8" rx="1" fill="#848484" /></Svg>
                </ShelfSwitch>
                <ShelfSwitch aria-label="Shelf menu"><Triangle /></ShelfSwitch>
            </ShelfSide>
            <ShelfBody>
                <TabRow>
                    {shelfTabs.map((name) => (
                        <Tab key={name} $active={name === active} onClick={() => setActive(name)}>{name}</Tab>
                    ))}
                    <Spacer />
                    <Svg w={16} h={22}><Trash x={1} y={3} /></Svg>
                </TabRow>
                <ShelfIcons>
                    {shelfIcons.map(([label, art]) => (
                        <ShelfButton key={label} aria-label={label}><Svg size={32}>{art}</Svg></ShelfButton>
                    ))}
                </ShelfIcons>
            </ShelfBody>
        </Shelf>
    )
}

function ToolColumn() {
    return (
        <Toolbox>
            <HorizontalGrip $fixed />
            {tools.map(([label, art], i) => (
                <ToolSlot key={label} aria-label={label} $active={i === 0}>
                    <Svg size={32}>{art}</Svg>
                </ToolSlot>
            ))}
            <LayoutRow $top="10px">
                <LayoutSlot aria-label="Single perspective view">
                    <Svg size={32}>
                        <IsoGrid />
                        <path d="M7 21V26" stroke="#1c9a2a" strokeWidth="2" />
                        <path d="M7 26 2 29" stroke="#23c" strokeWidth="2" />
                        <path d="M7 26 12 29" stroke="#d22" strokeWidth="2" />
                    </Svg>
                </LayoutSlot>
            </LayoutRow>
            <LayoutRow $top="2px">
                <LayoutSlot $half aria-label="Four view">
                    <Svg size={15}><path d="M7.5 1V14M1 7.5H14" stroke="#333" strokeWidth="1.4" /></Svg>
                </LayoutSlot>
                <LayoutSlot $half aria-label="Persp outliner">
                    <Svg size={15}>
                        <path d="M1 6 8 2 14 6 8 10zM4 4 11 8M11 4 4 8" stroke="#333" />
                        <path d="M4 10V13L2 14" stroke="#23c" strokeWidth="1.4" /><path d="M4 13 7 14" stroke="#d22" strokeWidth="1.4" />
                    </Svg>
                </LayoutSlot>
            </LayoutRow>
            <MayaSlot aria-label="Maya home">
                <Svg size={24}>
                    <g stroke="#c9c9c9" strokeWidth="1.3" strokeLinecap="round">
                        <path d="M3 5Q8 0 14 3 20 8 20 16 19 21 15 23" />
                        <path d="M4 8Q9 3 13 7 17 12 17 18" />
                        <path d="M3 5 4 8Q6 6 9 7 12 10 10 13" />
                        <path d="M10 13Q5 15 5 20 7 24 12 23 16 21 15 17 13 13 10 16 9 19 12 20" />
                        <path d="M6 10Q5 14 3 17 2 21 4 23" />
                    </g>
                </Svg>
            </MayaSlot>
        </Toolbox>
    )
}

// The ground plane runs from -1 to 1 on both axes, 24 cells a side.
const project = (a, b) => {
    const depth = 1 - 0.1696 * (a + b)
    return `${(429.5 + (158.2 * (a - b)) / depth).toFixed(1)} ${(223.5 + (73.7 * (a + b)) / depth).toFixed(1)}`
}

function Scene() {
    const steps = Array.from({ length: 25 }, (_, i) => (i - 12) / 12)
    return (
        <svg viewBox="0 0 859 448" role="img" aria-label="Perspective view" fill="none">
            {steps.map((t) => (
                <path key={t} d={`M${project(t, -1)}L${project(t, 1)}M${project(-1, t)}L${project(1, t)}`} stroke="#878787" strokeWidth="1" shapeRendering="crispEdges" />
            ))}
            <path d={`M${project(0, -1)}L${project(0, 1)}M${project(-1, 0)}L${project(1, 0)}`} stroke="#000" strokeWidth="2" shapeRendering="crispEdges" />

            <ellipse cx="806" cy="74" rx="43" ry="26" fill="url(#cubeShadow)" />
            <path d="M773 31 806 20 840 31 806 45z" fill="#a6b3c3" />
            <path d="M773 31 806 45V90L776 70z" fill="#a1aebd" />
            <path d="M840 31 806 45V90L837 70z" fill="#9ba9b9" />
            <path d="M773 31 806 45 840 31M806 45V90M773 31 776 70M840 31 837 70M773 31 806 20 840 31" stroke="#7a8898" strokeDasharray="7 2" />
            <g fill="#6b7886" fontFamily="Roboto, sans-serif" fontWeight="700" fontSize="9" textAnchor="middle">
                <text transform="matrix(.9 .42 0 1.1 790 65)">FRONT</text>
                <text transform="matrix(.9 -.42 0 1.1 823 65)">RIGHT</text>
                <text transform="matrix(.8 .3 -.8 .4 805 33)">TOP</text>
            </g>

            <g strokeWidth="1" shapeRendering="crispEdges">
                <path d="M25.5 422V409" stroke="#0f0" />
                <path d="M25 422 15 427" stroke="#00f" />
                <path d="M25 422 34 426" stroke="#f00" />
            </g>
            <g fontFamily="Liberation Mono, DejaVu Sans Mono, monospace" fontWeight="700" fontSize="12">
                <text x="21" y="406" fill="#0f0">y</text>
                <text x="10" y="425" fill="#00f">z</text>
                <text x="32" y="425" fill="#f00">x</text>
                <text x="407" y="438" fill="#004d1c">persp</text>
            </g>
        </svg>
    )
}

function Viewport() {
    return (
        <Panel>
            <MenuBar $height="19px" $top="2px" $pad="7px">
                {['View', 'Shading', 'Lighting', 'Show', 'Renderer', 'Panels'].map((name) => (
                    <MenuItem key={name}>{name}</MenuItem>
                ))}
            </MenuBar>
            <PanelTools>
                {panelTools.map((tool, i) =>
                    tool ? (
                        <PanelTool key={tool[0]} aria-label={tool[0]} $on={tool[1]}>
                            <Svg size={16}>{tool[2]}</Svg>
                        </PanelTool>
                    ) : (
                        <Divider key={i} $width={i ? '11px' : '10px'}>
                            <Svg w={5} h={16}>
                                <path d="M2.5 0V16" stroke="#777" />
                                <rect x="1" y="5" width="3" height="6" fill="#333" stroke="#888" />
                            </Svg>
                        </Divider>
                    )
                )}
            </PanelTools>
            <Canvas>
                <Scene />
            </Canvas>
        </Panel>
    )
}

function AttributeEditor() {
    return (
        <Dock>
            <Spacer $width="2px" />
            <SplitterDots />
            <Editor>
                <EditorTitle>
                    <HorizontalGrip />
                    Attribute Editor
                    <HorizontalGrip />
                    <TitleTools>
                        <TitleTool aria-label="Float">
                            <Svg size={10}><path d="M1.5 4.5H6.5V8.5H1.5zM4.5 4V1.5H8.5V6.5H7M1 4.5H7M4 1.5H9" stroke="#000" strokeWidth="1.2" /></Svg>
                        </TitleTool>
                        <TitleTool aria-label="Close">
                            <Svg size={10}><path d="M1.5 1.5 8.5 8.5M8.5 1.5 1.5 8.5" stroke="#000" strokeWidth="1.8" /></Svg>
                        </TitleTool>
                    </TitleTools>
                </EditorTitle>
                <MenuBar $height="26px" $top="5px">
                    {['List', 'Selected', 'Focus', 'Attributes', 'Show', 'Help'].map((name) => (
                        <MenuItem key={name}>{name}</MenuItem>
                    ))}
                </MenuBar>
                <EditorBody>Make a selection to view attributes</EditorBody>
                <EditorActions>
                    <ActionButton disabled>Select</ActionButton>
                    <ActionButton>Load Attributes</ActionButton>
                    <ActionButton disabled>Copy Tab</ActionButton>
                </EditorActions>
            </Editor>
            <SideTabs>
                <SideTab $active>Attribute Editor</SideTab>
                <SideTab>Channel Box / Layer Editor</SideTab>
            </SideTabs>
        </Dock>
    )
}

function TimeSlider() {
    return (
        <Bar $height="34px" $gap="4px" $end="5px">
            <Grip $tight />
            <Track>
                {Array.from({ length: 24 }, (_, i) => (
                    <Frames key={i} $current={i === 0}>
                        {i + 1}
                        {i === 0 && <CurrentFrame>1</CurrentFrame>}
                    </Frames>
                ))}
            </Track>
            <Field $width="68px" $height="20px" aria-label="Current time" defaultValue="1.00" />
            <Transport>
                {transport.map(([label, d, key]) => (
                    <TransportButton key={label} aria-label={label}>
                        <Svg w={24} h={22}>
                            <path d={d} fill="url(#silver)" stroke="#222" strokeWidth=".8" />
                            {key && <path d={`M${key}.5 1V21`} stroke="#d4202a" />}
                        </Svg>
                    </TransportButton>
                ))}
            </Transport>
        </Bar>
    )
}

const MiniWindow = ({ children }) => (
    <Svg size={16}>
        <path d="M1 1H15V15H1z" fill="#eee" stroke="#222" />
        <path d="M1 1H15V4H1z" fill="#6aaee4" />
        {children}
    </Svg>
)

function App() {
    return (
        <Desktop>
            <GlobalStyle />
            <Gradients />
            <TitleBar>
                <AppLogo>
                    <Svg w={14} h={15}>
                        <path d="M0 0H12V14H0z" fill="#222c2e" />
                        <path d="M2 2Q7-1 9 5 10 9 9 12M3 4Q7 3 7 7 3 7 3 12M7 7Q8 10 6 12" stroke="#b7c4c8" />
                    </Svg>
                </AppLogo>
                <WindowTitle>Autodesk Maya 2013 x64 - Student Version: untitled*</WindowTitle>
                <WindowButtons>
                    <WindowButton aria-label="Minimize"><Svg w={12} h={12}><path d="M2 6H10" stroke="#222" strokeWidth="2" /></Svg></WindowButton>
                    <WindowButton aria-label="Maximize"><Svg w={12} h={12}><path d="M1.5 0V6.5H10.5V0M1 1H11" stroke="#222" strokeWidth="1.2" /></Svg></WindowButton>
                    <WindowButton $close aria-label="Close"><Svg w={12} h={12}><path d="M2-1 10 7M10-1 2 7" stroke="#fff" strokeWidth="1.7" /></Svg></WindowButton>
                </WindowButtons>
            </TitleBar>
            <Frame>
                <MenuBar>
                    {menus.map((name) => (
                        <MenuItem key={name}>{name}</MenuItem>
                    ))}
                </MenuBar>
                <StatusLine />
                <ShelfPanel />
                <Workspace>
                    <ToolColumn />
                    <Viewport />
                    <AttributeEditor />
                </Workspace>
                <TimeSlider />
                <Bar $height="30px" $gap="4px">
                    <Grip $tight />
                    <Field $width="68px" aria-label="Animation start" defaultValue="1.00" />
                    <Field $width="68px" aria-label="Playback start" defaultValue="1.00" />
                    <RangeTrack>
                        <RangeBar style={{ width: `${(24 / (48 - 1)) * 100}%` }}>
                            <RangeHandle aria-label="Range start" />
                            1
                            <Spacer />
                            24
                            <RangeHandle aria-label="Range end" />
                        </RangeBar>
                    </RangeTrack>
                    <Field $width="68px" aria-label="Playback end" defaultValue="24.00" />
                    <Field $width="68px" aria-label="Animation end" defaultValue="48.00" />
                    <Triangle />
                    <Spacer $width="1px" />
                    <Field $width="102px" $fill="#444" aria-label="Animation layer" readOnly value="No Anim Layer" />
                    <Triangle />
                    <Field $width="103px" $fill="#444" aria-label="Character set" readOnly value="No Character Set" />
                    <Svg w={18} h={12}>
                        <ellipse cx="4" cy="6" rx="3" ry="2" stroke="#bbb" strokeWidth="1.4" />
                        <path d="M7 6H16V9M13 6V9" stroke="#bbb" strokeWidth="1.4" />
                    </Svg>
                    <MiniWindow><path d="M9 5V14M3 12 8 8 14 10M4 6 14 13M4 9H13" stroke="#c9303a" strokeWidth="1.1" /></MiniWindow>
                </Bar>
                <Bar $height="32px">
                    <Grip />
                    <CommandLabel htmlFor="mel">MEL</CommandLabel>
                    <Field id="mel" $height="25px" />
                    <Spacer $width="6px" />
                    <Field $height="25px" $fill="#000" $edge="#222" readOnly aria-label="Command result" />
                    <Spacer $width="1px" />
                    <MiniWindow><path d="M3 6H13V9H3zM3 11H13V13H3z" fill="#888" stroke="#333" strokeWidth=".8" /></MiniWindow>
                </Bar>
                <Bar $height="27px" $end="3px">
                    <Grip />
                    <HelpLine>
                        Select Tool: select an object
                        <Svg w={14} h={20}><path d="M2 20 14 8M6 20 14 12M10 20 14 16" stroke="#1e1e1e" strokeWidth="1.6" /></Svg>
                    </HelpLine>
                </Bar>
            </Frame>
        </Desktop>
    )
}

export default App
